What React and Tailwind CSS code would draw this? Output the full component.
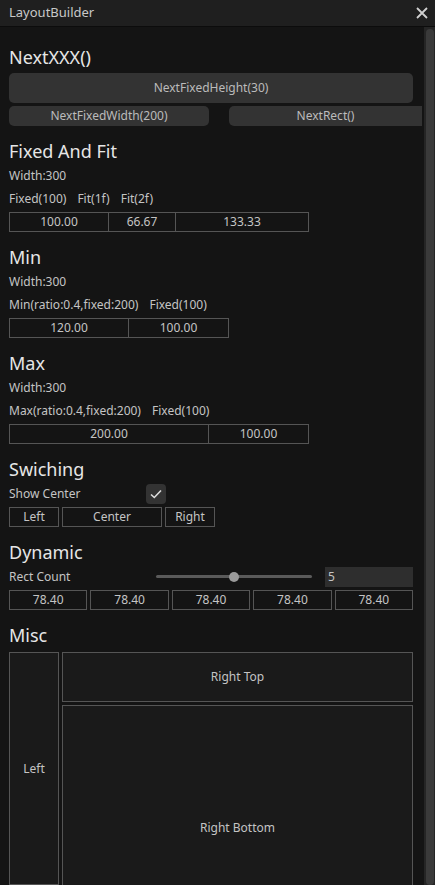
import React from 'react'

const box = 'h-[20px] border border-[#555] flex items-center justify-center text-[12px] text-[#c4c4c4]'

function Heading({ children, className = '' }) {
  return <div className={'shrink-0 h-[27px] flex items-center text-[18px] text-[#e6e6e6] leading-none ' + className}>{children}</div>
}

function Label({ children, className = '' }) {
  return <div className={'shrink-0 h-[23px] flex items-center text-[12px] text-[#c4c4c4] ' + className}>{children}</div>
}

export default function App() {
  return (
    <div className="w-[435px] h-[885px] overflow-hidden bg-[#141414] flex flex-col" style={{ fontFamily: '"Noto Sans", sans-serif' }}>
      <div className="h-[27px] shrink-0 bg-[#1f1f1f] flex items-center justify-between pl-[9px] pr-[7px] text-[13px] text-[#c8c8c8] border-b border-[#0c0c0c]">
        <span>LayoutBuilder</span>
        <svg width="12" height="12" viewBox="0 0 12 12" stroke="#d0d0d0" strokeWidth="1.8"><path d="M1 1L11 11M11 1L1 11" /></svg>
      </div>
      <div className="flex flex-1 min-h-0">
        <div className="w-[424px] pl-[9px] pt-[16px] flex flex-col">
          <Heading>NextXXX()</Heading>
          <div className="shrink-0 mt-[3px] w-[404px] h-[30px] rounded-[5px] bg-[#333] flex items-center justify-center text-[12px] text-[#bbb]">NextFixedHeight(30)</div>
          <div className="shrink-0 mt-[3px] flex h-[20px]">
            <div className="w-[200px] rounded-[5px] bg-[#333] flex items-center justify-center text-[12px] text-[#bbb]">NextFixedWidth(200)</div>
            <div className="ml-[20px] w-[193px] rounded-l-[5px] bg-[#333] flex items-center justify-center text-[12px] text-[#bbb]">NextRect()</div>
          </div>

          <Heading className="mt-[11px]">Fixed And Fit</Heading>
          <Label>Width:300</Label>
          <Label className="gap-[11px]"><span>Fixed(100)</span><span>Fit(1f)</span><span>Fit(2f)</span></Label>
          <div className="shrink-0 mt-[2px] flex">
            <div className={box + ' w-[100px]'}>100.00</div>
            <div className={box + ' w-[67px] border-l-0'}>66.67</div>
            <div className={box + ' w-[133px] border-l-0'}>133.33</div>
          </div>

          <Heading className="mt-[11px]">Min</Heading>
          <Label>Width:300</Label>
          <Label className="gap-[11px]"><span>Min(ratio:0.4,fixed:200)</span><span>Fixed(100)</span></Label>
          <div className="shrink-0 mt-[2px] flex">
            <div className={box + ' w-[120px]'}>120.00</div>
            <div className={box + ' w-[100px] border-l-0'}>100.00</div>
          </div>

          <Heading className="mt-[11px]">Max</Heading>
          <Label>Width:300</Label>
          <Label className="gap-[11px]"><span>Max(ratio:0.4,fixed:200)</span><span>Fixed(100)</span></Label>
          <div className="shrink-0 mt-[2px] flex">
            <div className={box + ' w-[200px]'}>200.00</div>
            <div className={box + ' w-[100px] border-l-0'}>100.00</div>
          </div>

          <Heading className="mt-[11px]">Swiching</Heading>
          <div className="shrink-0 h-[23px] flex items-center text-[12px] text-[#c4c4c4]">
            <span className="w-[137px]">Show Center</span>
            <div className="w-[20px] h-[20px] rounded-[4px] bg-[#333] flex items-center justify-center">
              <svg width="12" height="10" viewBox="0 0 12 10" fill="none" stroke="#ddd" strokeWidth="1.6"><path d="M1 5.5L4.3 8.5L11 1.5" /></svg>
            </div>
          </div>
          <div className="shrink-0 mt-[2px] flex gap-[3px]">
            <div className={box + ' w-[50px]'}>Left</div>
            <div className={box + ' w-[100px]'}>Center</div>
            <div className={box + ' w-[50px]'}>Right</div>
          </div>

          <Heading className="mt-[11px]">Dynamic</Heading>
          <div className="shrink-0 h-[23px] flex items-center text-[12px] text-[#c4c4c4]">
            <span className="w-[147px]">Rect Count</span>
            <div className="relative w-[156px] h-[12px] flex items-center">
              <div className="w-full h-[3px] bg-[#5a5a5a] rounded" />
              <div className="absolute left-[73px] w-[10px] h-[10px] rounded-full bg-[#9a9a9a]" />
            </div>
            <div className="ml-[13px] w-[88px] h-[20px] bg-[#2e2e2e] flex items-center pl-[3px]">5</div>
          </div>
          <div className="shrink-0 mt-[2px] flex gap-[3px] w-[404px]">
            {[0, 1, 2, 3, 4].map(i => <div key={i} className={box + ' flex-1'}>78.40</div>)}
          </div>

          <Heading className="mt-[11px]">Misc</Heading>
          <div className="mt-[4px] flex gap-[3px] w-[404px] flex-1 min-h-0">
            <div className="w-[50px] border border-[#555] bg-[#1a1a1a] flex items-center justify-center text-[12px] text-[#c4c4c4]">Left</div>
            <div className="flex-1 flex flex-col gap-[3px]">
              <div className="shrink-0 h-[50px] border border-[#555] bg-[#1a1a1a] flex items-center justify-center text-[12px] text-[#c4c4c4]">Right Top</div>
              <div className="shrink-0 h-[245px] border border-[#555] bg-[#1a1a1a] flex items-center justify-center text-[12px] text-[#c4c4c4]">Right Bottom</div>
            </div>
          </div>
        </div>
        <div className="w-[11px] bg-[#252525] pt-[2px] flex justify-center">
          <div className="w-[8px] h-[856px] rounded-full bg-[#3a3a3a]" />
        </div>
      </div>
    </div>
  )
}
